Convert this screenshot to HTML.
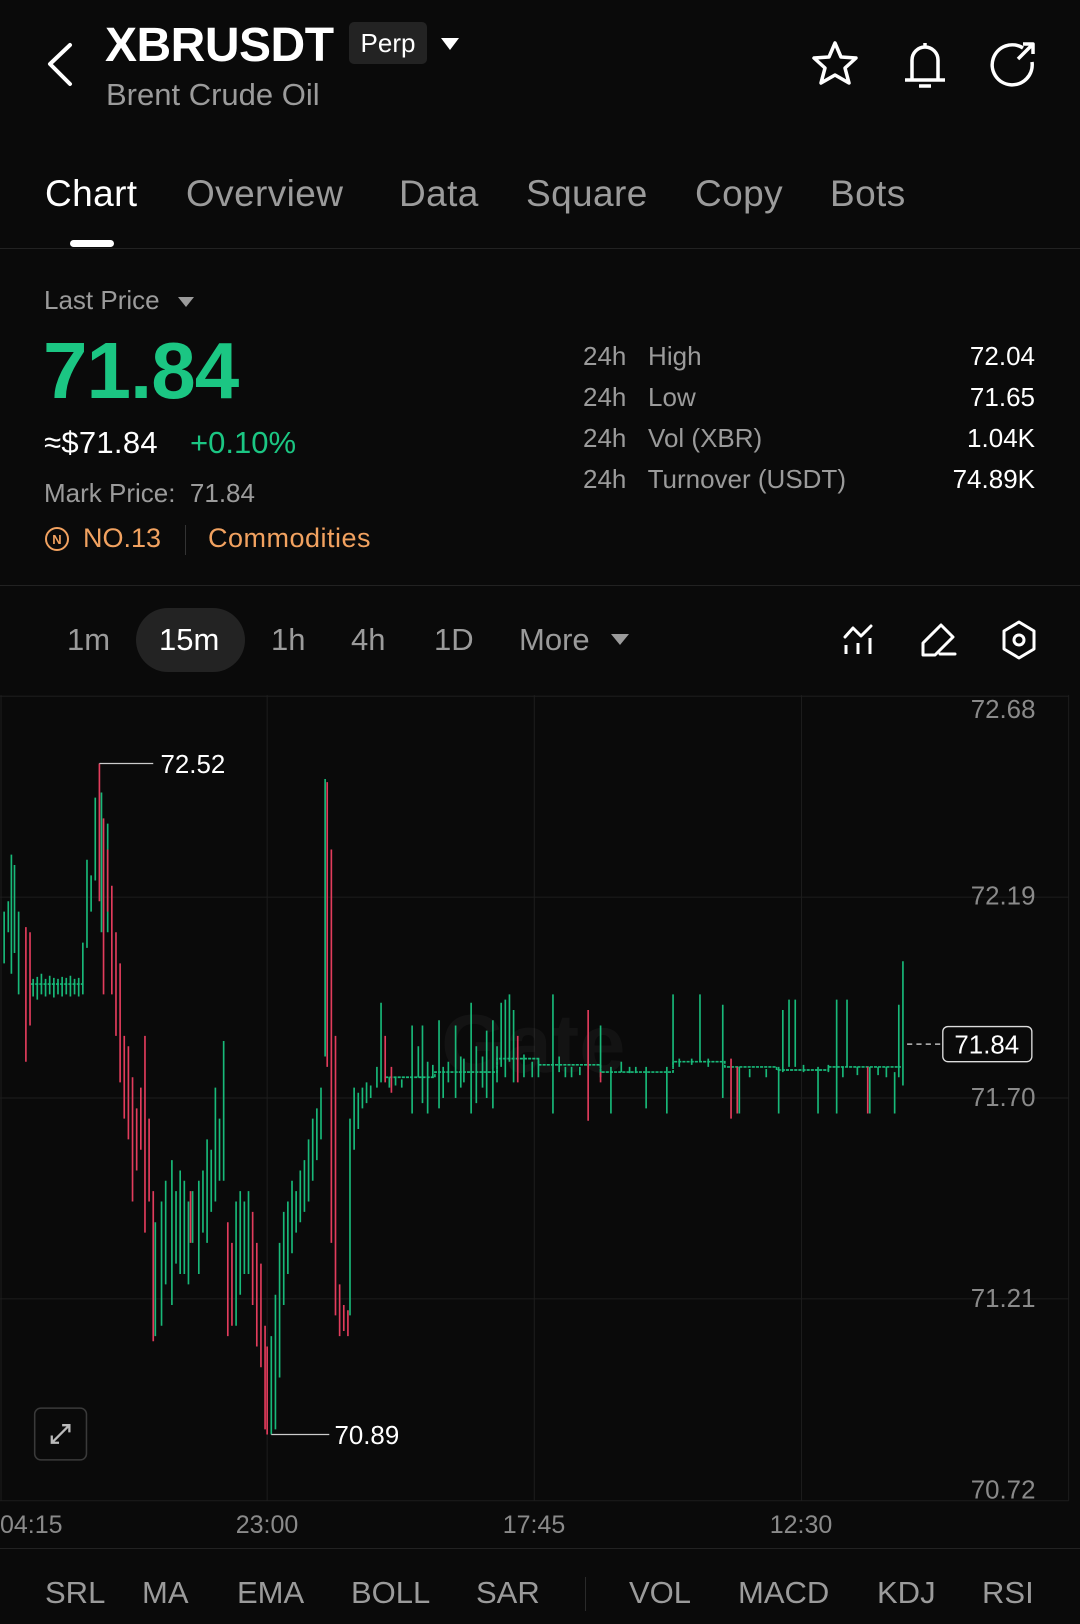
<!DOCTYPE html>
<html><head><meta charset="utf-8"><style>
*{margin:0;padding:0;box-sizing:border-box}
body{width:1080px;height:1624px;background:#0a0a0a;color:#fff;font-family:"Liberation Sans",sans-serif;position:relative;overflow:hidden}
.a{position:absolute;white-space:nowrap}
.g{color:#9b9b9b}
.hl{position:absolute;left:0;width:1080px;height:1px;background:#222}
.t{font-size:37px;letter-spacing:0.4px}
</style></head><body>
<svg class="a" style="left:0;top:0" width="1080" height="700" viewBox="0 0 1080 700" fill="none" stroke="#fff" stroke-width="4" stroke-linecap="round" stroke-linejoin="round">
<path d="M70 45 L50 64 L70 84"/>
<path d="M835 43 L841 57 L856 58 L845 68 L849 83 L835 75 L821 83 L825 68 L814 58 L829 57 Z" stroke-width="3.5"/>
<path d="M912 79 V60 A13 13 0 0 1 938 60 V79 M905 80 H945 M919 86 H931 M925 43 V47" stroke-width="3.5" stroke-linecap="butt"/>
<path d="M1023 48 A20 20 0 1 0 1032 62" stroke-width="3.5" stroke-linecap="butt"/>
<path d="M1018 59 L1032 45 M1023 44 H1033 V54" stroke-width="3.5" stroke-linecap="butt"/>
<path d="M845 637 L853 628 L861 636 L871 626" stroke-width="3"/>
<path d="M846 645 V654 M858 643 V654 M870 638 V654" stroke-width="3" stroke-linecap="butt"/>
<path d="M923 655 V643 L941 625 L953 637 L935 655 Z M940 654 H955" stroke-width="3"/>
<path d="M1019 622 L1034 631 V649 L1019 658 L1004 649 V631 Z" stroke-width="3"/>
<circle cx="1019" cy="640" r="5" stroke-width="3"/>
</svg>
<div class="a" style="left:105px;top:18px;font-size:48px;font-weight:bold;letter-spacing:-0.5px">XBRUSDT</div>
<div class="a" style="left:349px;top:22px;width:78px;height:42px;background:#232323;border-radius:5px;font-size:26px;line-height:42px;text-align:center">Perp</div>
<div class="a" style="left:441px;top:38px;width:0;height:0;border-left:9px solid transparent;border-right:9px solid transparent;border-top:12px solid #fff"></div>
<div class="a g" style="left:106px;top:77px;font-size:31px">Brent Crude Oil</div>

<div class="a t" style="left:45px;top:173px">Chart</div>
<div class="a g t" style="left:186px;top:173px">Overview</div>
<div class="a g t" style="left:399px;top:173px">Data</div>
<div class="a g t" style="left:526px;top:173px">Square</div>
<div class="a g t" style="left:695px;top:173px">Copy</div>
<div class="a g t" style="left:830px;top:173px">Bots</div>
<div class="a" style="left:70px;top:240px;width:44px;height:7px;border-radius:4px;background:#fff"></div>
<div class="hl" style="top:248px"></div>

<div class="a g" style="left:44px;top:285px;font-size:26px">Last Price</div>
<div class="a" style="left:178px;top:297px;border-left:8px solid transparent;border-right:8px solid transparent;border-top:10px solid #9b9b9b"></div>
<div class="a" style="left:43px;top:325px;font-size:80px;font-weight:bold;color:#1bc683;letter-spacing:-1px">71.84</div>
<div class="a" style="left:44px;top:425px;font-size:31px;letter-spacing:0.3px">≈$71.84</div>
<div class="a" style="left:190px;top:425px;font-size:31px;color:#1bc683">+0.10%</div>
<div class="a g" style="left:44px;top:478px;font-size:26px">Mark Price:&nbsp; 71.84</div>
<svg class="a" style="left:44px;top:526px" width="26" height="26" viewBox="0 0 26 26"><circle cx="13" cy="13" r="11" fill="none" stroke="#f2a260" stroke-width="2"/><text x="13" y="18" font-size="13" fill="#f2a260" text-anchor="middle" font-family="Liberation Sans" font-weight="bold">N</text></svg>
<div class="a" style="left:83px;top:523px;font-size:27px;color:#f2a260">NO.13</div>
<div class="a" style="left:185px;top:525px;width:1px;height:30px;background:#333"></div>
<div class="a" style="left:208px;top:523px;font-size:27px;color:#f2a260;letter-spacing:0.5px">Commodities</div>

<div class="a g" style="left:583px;top:341px;font-size:26px">24h&nbsp;&nbsp; High</div>
<div class="a g" style="left:583px;top:382px;font-size:26px">24h&nbsp;&nbsp; Low</div>
<div class="a g" style="left:583px;top:423px;font-size:26px">24h&nbsp;&nbsp; Vol (XBR)</div>
<div class="a g" style="left:583px;top:464px;font-size:26px">24h&nbsp;&nbsp; Turnover (USDT)</div>
<div class="a" style="right:45px;top:341px;font-size:26px">72.04</div>
<div class="a" style="right:45px;top:382px;font-size:26px">71.65</div>
<div class="a" style="right:45px;top:423px;font-size:26px">1.04K</div>
<div class="a" style="right:45px;top:464px;font-size:26px">74.89K</div>
<div class="hl" style="top:585px"></div>

<div class="a" style="left:136px;top:608px;width:109px;height:64px;border-radius:32px;background:#232323"></div>
<div class="a g" style="left:67px;top:622px;font-size:31px">1m</div>
<div class="a" style="left:159px;top:622px;font-size:31px">15m</div>
<div class="a g" style="left:271px;top:622px;font-size:31px">1h</div>
<div class="a g" style="left:351px;top:622px;font-size:31px">4h</div>
<div class="a g" style="left:434px;top:622px;font-size:31px">1D</div>
<div class="a g" style="left:519px;top:622px;font-size:31px">More</div>
<div class="a" style="left:611px;top:634px;border-left:9px solid transparent;border-right:9px solid transparent;border-top:11px solid #9b9b9b"></div>

<svg class="a" style="left:0;top:695px" width="1080" height="808" viewBox="0 671 1043 780" fill="none">
<g stroke="#1d1d1d" stroke-width="1">
<path d="M0 672H1032 M0 866H1032 M0 1060H1032 M0 1254H1032 M0 1449H1032 M1 671V1449 M258 671V1449 M516 671V1449 M774 671V1449 M1032 671V1449"/>
</g>
<text x="515" y="1035" font-size="80" font-family="Liberation Sans" font-weight="bold" fill="#fff" opacity="0.035" text-anchor="middle">Gate</text>
<g stroke="#18b979" stroke-width="1.6">
<path d="M372 1040H420V1035H480V1022H520V1028H580V1035H650V1025H700V1030H750V1033H800V1030H870 M30 950H80" stroke-dasharray="3 1"/>
<path d="M4 880V930M8 870V900M11 825V940M14 835V920M18 880V960M32 945V962M36 943V965M40 940V960M44 945V962M48 942V960M52 944V963M56 945V960M60 943V962M64 944V960M68 942V962M72 945V960M76 944V962M80 910V960M84 830V915M88 845V880M92 770V850M98 765V900M104 795V900M150 1180V1290M156 1160V1280M160 1140V1240M166 1120V1260M170 1150V1220M174 1130V1230M178 1140V1230M182 1160V1240M186 1150V1200M192 1140V1230M196 1130V1190M200 1100V1200M204 1110V1170M208 1050V1160M212 1080V1140M216 1005V1140M228 1160V1280M232 1150V1250M236 1160V1230M240 1150V1230M262 1290V1385M266 1250V1380M270 1200V1330M274 1170V1260M278 1160V1230M282 1140V1210M286 1150V1190M290 1130V1180M294 1120V1170M298 1100V1160M302 1080V1140M306 1070V1120M310 1050V1100M314 752V1020M338 1080V1270M342 1050V1110M346 1055V1090M350 1050V1070M354 1045V1065M358 1048V1060M364 1030V1050M368 968V1045M376 1040V1050M382 1040V1048M388 1042V1050M398 990V1075M404 1010V1040M408 990V1065M413 1025V1075M418 1028V1040M424 985V1070M428 1030V1060M433 1025V1045M440 990V1060M445 1020V1050M448 1022V1045M455 968V1075M460 1010V1065M466 1020V1050M470 995V1060M476 985V1070M480 1010V1045M484 968V1030M488 965V1040M492 960V1025M496 975V1045M506 1018V1040M514 1025V1040M520 1022V1040M534 960V1075M540 1020V1035M546 1030V1040M552 1030V1040M560 1030V1038M580 990V1040M590 1030V1075M600 1025V1035M608 1030V1036M614 1030V1036M624 1030V1070M644 1030V1075M650 960V1030M656 1022V1030M668 1022V1028M676 960V1025M684 1022V1030M698 970V1060M714 1030V1075M724 1032V1040M740 1032V1040M752 1030V1075M756 975V1035M762 965V1030M768 965V1030M776 1028V1035M790 1030V1075M800 1028V1035M808 965V1075M814 1030V1040M818 965V1030M828 1030V1038M840 1030V1075M848 1030V1038M856 1030V1040M864 1035V1075M868 970V1040M872 928V1048"/>
</g>
<g stroke="#e23c5c" stroke-width="1.6">
<path d="M25 895V1025M29 900V990M96 737V870M100 790V960M104 820V880M108 855V960M112 900V1000M116 930V1045M120 1000V1080M124 1010V1100M128 1040V1160M132 1070V1130M136 1050V1110M140 1000V1190M144 1080V1160M148 1150V1295M184 1150V1200M220 1180V1290M224 1200V1280M244 1170V1260M248 1200V1300M252 1220V1320M256 1280V1380M258 1300V1385M316 755V1030M320 820V1200M324 1000V1270M328 1240V1290M332 1260V1285M336 1265V1290M372 1000V1045M378 1030V1055M500 1000V1045M568 975V1082M580 1035V1045M706 1022V1080M712 1030V1075M838 1030V1075"/>
</g>
<path d="M96 737H148 M262 1385H318" stroke="#ccc" stroke-width="1.2"/>
<path d="M876 1008H910" stroke="#ddd" stroke-width="1.2" stroke-dasharray="5 4"/>
<rect x="910.5" y="991" width="86" height="34" rx="5" fill="#0a0a0a" stroke="#ddd" stroke-width="1.3"/>
<g font-family="Liberation Sans" font-size="25">
<text x="155" y="746" fill="#fff">72.52</text>
<text x="323" y="1394" fill="#fff">70.89</text>
<text x="953" y="1017" fill="#fff" text-anchor="middle">71.84</text>
<g fill="#8a8a8a" text-anchor="end">
<text x="1000" y="693">72.68</text><text x="1000" y="873">72.19</text><text x="1000" y="1068">71.70</text><text x="1000" y="1262">71.21</text><text x="1000" y="1447">70.72</text>
</g>
</g>
<rect x="33.5" y="1359.5" width="50" height="50" rx="6" stroke="#3a3a3a" stroke-width="1.5"/>
<path d="M50 1393L67 1376M60 1376H67V1383M50 1386V1393H57" stroke="#bbb" stroke-width="2.2"/>
</svg>
<div class="a g" style="left:0;top:1511px;font-size:25px;color:#8a8a8a">04:15</div>
<div class="a g" style="left:267px;top:1511px;font-size:25px;transform:translateX(-50%);color:#8a8a8a">23:00</div>
<div class="a g" style="left:534px;top:1511px;font-size:25px;transform:translateX(-50%);color:#8a8a8a">17:45</div>
<div class="a g" style="left:801px;top:1511px;font-size:25px;transform:translateX(-50%);color:#8a8a8a">12:30</div>
<div class="hl" style="top:1548px"></div>
<div class="a g" style="left:45px;top:1575px;font-size:31px">SRL</div>
<div class="a g" style="left:142px;top:1575px;font-size:31px">MA</div>
<div class="a g" style="left:237px;top:1575px;font-size:31px">EMA</div>
<div class="a g" style="left:351px;top:1575px;font-size:31px">BOLL</div>
<div class="a g" style="left:476px;top:1575px;font-size:31px">SAR</div>
<div class="a" style="left:585px;top:1577px;width:1px;height:34px;background:#2a2a2a"></div>
<div class="a g" style="left:629px;top:1575px;font-size:31px">VOL</div>
<div class="a g" style="left:738px;top:1575px;font-size:31px">MACD</div>
<div class="a g" style="left:877px;top:1575px;font-size:31px">KDJ</div>
<div class="a g" style="left:982px;top:1575px;font-size:31px">RSI</div>
</body></html>
